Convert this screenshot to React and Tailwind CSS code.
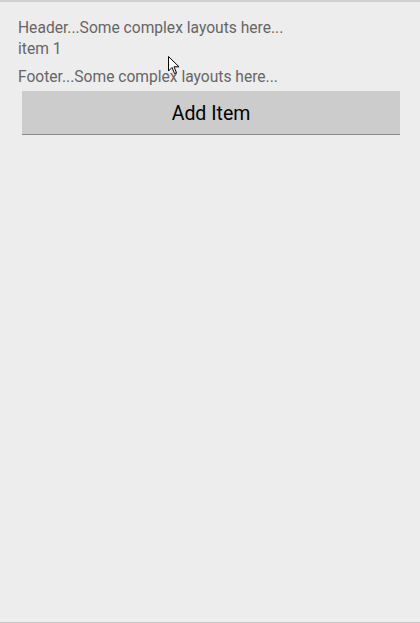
import React from 'react';

const Cursor = () => (
  <svg className="absolute left-[168px] top-[54px]" width="12" height="19" viewBox="0 0 12 19">
    <path d="M0.5 0.5 L0.5 15 L4 11.5 L6.5 17.5 L8.5 16.7 L6 10.8 L11 10.8 Z" fill="#fff" stroke="#000" strokeWidth="1" strokeLinejoin="round" />
  </svg>
);

export default function App() {
  return (
    <div className="relative w-[420px] h-[623px] bg-[#ededed] border-t-2 border-t-[#d0d0d0] border-b border-b-[#c4c4c4] overflow-hidden" style={{ fontFamily: 'Roboto, sans-serif' }}>
      <div className="pt-[16px] px-[18px] text-[15.6px] leading-[21px] text-[#666666]">
        <p>Header...Some complex layouts here...</p>
        <p>item 1</p>
        <p className="mt-[7px]">Footer...Some complex layouts here...</p>
      </div>
      <div className="px-[22px] pr-[20px] mt-[3px]">
        <button className="w-full h-[44px] pt-[2px] bg-[#cccccc] border-b border-b-[#8a8a8a] text-[19.5px] text-black">
          Add Item
        </button>
      </div>
      <Cursor />
    </div>
  );
}
